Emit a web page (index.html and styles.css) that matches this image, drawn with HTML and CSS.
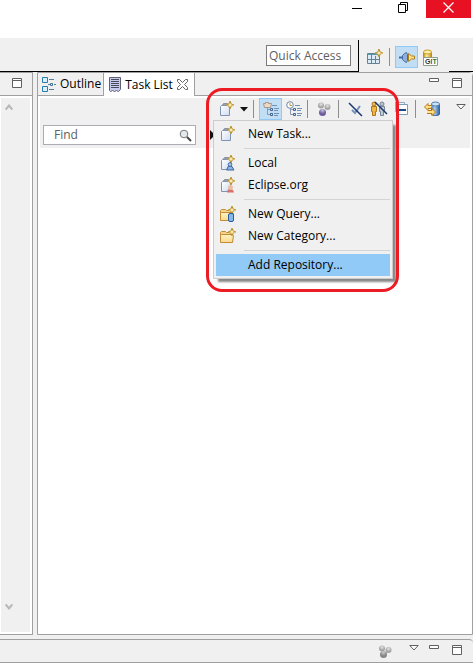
FILE: index.html
```html
<!DOCTYPE html>
<html lang="en">
<head>
<meta charset="utf-8">
<title>Task List</title>
<link rel="stylesheet" href="styles.css">
</head>
<body>
<svg class="defs" aria-hidden="true">
  <defs>
    <linearGradient id="page" x2="1" y2="1"><stop offset="0" stop-color="#fff"/><stop offset="1" stop-color="#cfdcf0"/></linearGradient>
    <linearGradient id="gold" y2="1" x2="0"><stop offset="0" stop-color="#fff3c4"/><stop offset="1" stop-color="#f8d98c"/></linearGradient>
    <linearGradient id="steel"><stop offset="0" stop-color="#4f7fbd"/><stop offset=".4" stop-color="#a9cdf0"/><stop offset="1" stop-color="#2d5b9d"/></linearGradient>
    <linearGradient id="brass"><stop offset="0" stop-color="#c48a10"/><stop offset=".4" stop-color="#fff0a0"/><stop offset="1" stop-color="#c48a10"/></linearGradient>
    <radialGradient id="ball" cx=".5" cy=".3"><stop offset="0" stop-color="#e4e4e4"/><stop offset="1" stop-color="#a2a2a2"/></radialGradient>
    <radialGradient id="violet" cx=".5" cy=".2"><stop offset="0" stop-color="#c9c2dd"/><stop offset="1" stop-color="#6b5c9c"/></radialGradient>
    <radialGradient id="dark" cx=".5" cy=".2"><stop offset="0" stop-color="#ccc"/><stop offset="1" stop-color="#858585"/></radialGradient>
    <symbol id="star" viewBox="0 0 7 7"><path d="M3.500 0 4.500 2.500 7 3.500 4.500 4.500 3.500 7 2.500 4.500 0 3.500 2.500 2.500Z" fill="#fff4bd" stroke="#b8902c" stroke-width=".9"/></symbol>
    <symbol id="task" viewBox="0 0 16 16"><path d="M3 4.500 4.500 2.500h4l1 2Z" fill="#9a9fa8" stroke="#8d929c"/><path d="M1.500 5.500l1-1h7l1 1v9h-9Z" fill="url(#page)" stroke="#8192b4"/><use href="#star" x="7" y="0" width="8" height="8"/></symbol>
    <symbol id="folder" viewBox="0 0 16 16"><path d="M.5 13.500v-9l1-1h4l1 1h6v9Z" fill="#f4d38b" stroke="#c58b35"/><path d="M.5 14.500v-7l1-1h11l1 1-1 7Z" fill="url(#gold)" stroke="#c58b35"/><use href="#star" x="8" y="0" width="8" height="8"/></symbol>
    <symbol id="maximize" viewBox="0 0 10 10"><path d="M.5.5h9v9h-9zM0 2.500h10" fill="#fff" stroke="#606060"/></symbol>
    <symbol id="minimize" viewBox="0 0 10 4"><path d="M.5.5h9v3h-9z" fill="#fff" stroke="#606060"/></symbol>
    <symbol id="viewmenu" viewBox="0 0 10 6"><path d="M.8.5h8.400L5 5Z" fill="#fff" stroke="#606060"/></symbol>
    <symbol id="tree" viewBox="0 0 16 16"><path d="M4.500 7v6.500H7M4.500 8.500H7" fill="none" stroke="#8b9aae"/><path d="M7.500 7.500h2v2h-2zM7.500 12.500h2v2h-2z" fill="#dbe8f7" stroke="#3f628f"/><path d="M11 7.500h5M11 9.500h4M11 12.500h5M11 14.500h4M9 4.500h5" stroke="#6c91ba"/></symbol>
  </defs>
</svg>

<header class="titlebar">
  <button class="win-btn" aria-label="Minimize"><svg width="14" height="12"><path d="M0 7.500h10" stroke="#000"/></svg></button>
  <button class="win-btn" aria-label="Restore"><svg width="12" height="11"><path d="M.5 2.500h7v8h-7zM2.500 2V.5h7v8H8" fill="none" stroke="#000"/></svg></button>
  <button class="win-btn close" aria-label="Close"><svg width="12" height="11"><path d="m.5.5 10 10M10.500.5l-10 10" stroke="#fff" stroke-width="1.200"/></svg></button>
</header>

<div class="frame">
  <div class="topbar">
    <div class="quick"><input type="text" aria-label="Quick Access" placeholder="Quick Access"></div>
    <div class="perspectives">
      <button class="tool" aria-label="Open Perspective"><svg width="17" height="16"><path d="M.5 4.500h12v10H.5z" fill="#dcebf7" stroke="#66828c"/><path d="M1 5.500h11" stroke="#579bb5"/><path d="M4.500 5v9M1 10.500h11M8.500 7v7" stroke="#66828c"/><use href="#star" x="8" y="0" width="8" height="8"/></svg></button>
      <span class="sep"></span>
      <button class="tool on" aria-label="Plug-in Development"><svg width="16" height="16"><path d="M0 8.500h4" stroke="#416aa8" stroke-width="2"/><path d="M3.500 6.500 5.500 4.500l2-1 1 2v6l-1 2-2-1-2-2Z" fill="#8eaedb" stroke="#456aa5"/><path d="M9.500 4.500 12.500 7h3v3h-3l-3 2.500Z" fill="#ffe28a" stroke="#ae8020"/></svg></button>
      <button class="tool" aria-label="Git"><svg width="16" height="17"><path d="M1.500 3v11c0 1 8 1 8 0V3" fill="url(#brass)" stroke="#c08a17"/><ellipse cx="5.500" cy="3" rx="4" ry="2" fill="#fff2a8" stroke="#c69a27"/><path d="M1.500 8.500h14v8h-14z" fill="#fff" stroke="#8da087"/><text class="git" x="3" y="15"><tspan fill="#333">G</tspan><tspan fill="#c22">I</tspan><tspan fill="#187f28">T</tspan></text></svg></button>
      <span class="corner"></span>
    </div>
  </div>

  <main class="workbench">
    <section class="side">
      <div class="side-head"><button class="plain" aria-label="Maximize"><svg width="10" height="10"><use href="#maximize"/></svg></button></div>
      <div class="side-body">
        <svg width="8" height="7"><path d="m.7 5.500 3.300-4 3.300 4" fill="none" stroke="#b8b8b8" stroke-width="2"/></svg>
        <svg width="8" height="7"><path d="m.7 1.500 3.300 4 3.300-4" fill="none" stroke="#b8b8b8" stroke-width="2"/></svg>
      </div>
    </section>

    <section class="view">
      <nav class="tabs">
        <button class="tab"><svg width="14" height="15"><path d="M.5.500h5v5h-5zM.5 9.500h5v5h-5z" fill="#d9efff" stroke="#297cad"/><path d="M7 2.500h5M7 12.500h5M6 7.500h2M12 7.500h2" stroke="#4b83a7"/><path d="M8.500 6.500h2v2h-2z" fill="#fff" stroke="#3c7195"/></svg>Outline</button>
        <button class="tab active"><svg width="12" height="15"><path d="M.5.500h11v12l-2 2-2-1-2 1-2-1-2 1-1-1Z" fill="#c5cbed" stroke="#625f75"/><path d="M2 2.500h8M2 4.500h8M2 6.500h8M2 8.500h8M2 10.500h8" stroke="#484b5a"/></svg>Task List<svg class="x" width="11" height="11"><path d="M.5.500h2l3 3 3-3h2v2l-3 3 3 3v2h-2l-3-3-3 3h-2v-2l3-3-3-3Z" fill="#fff" stroke="#666"/></svg></button>
        <div class="view-ctl"><button class="plain" aria-label="Minimize"><svg width="10" height="4"><use href="#minimize"/></svg></button><button class="plain" aria-label="Maximize"><svg width="10" height="10"><use href="#maximize"/></svg></button></div>
      </nav>
      <div class="panel">
        <div class="strip">
          <div class="toolbar">
            <div class="dropdown">
              <button class="tool" aria-label="New Task"><svg width="16" height="16"><use href="#task"/></svg></button>
              <button class="arrow" aria-label="More new items"><svg width="8" height="5"><path d="M0 0h8L4 4.500Z" fill="#111"/></svg></button>
              <ul class="menu">
                <li><button><svg width="16" height="16"><use href="#task"/></svg>New Task...</button></li>
                <li class="rule"></li>
                <li><button><svg width="16" height="16"><use href="#task"/><path d="m6.500 15 2-4h3l2.500 4Z" fill="#8fb4e4" stroke="#3d639c"/><circle cx="10" cy="9.500" r="1.800" fill="#b5cdee" stroke="#3d639c"/></svg>Local</button></li>
                <li><button><svg width="16" height="16"><use href="#task"/><path d="M7 15.500c0-5 6-5 7 0Z" fill="#d77068"/><circle cx="10.500" cy="10.500" r="2.500" fill="#e8bda6"/></svg>Eclipse.org</button></li>
                <li class="rule"></li>
                <li><button><svg width="16" height="16"><use href="#folder"/><rect x="8.500" y="7.500" width="5" height="8" rx="1.500" fill="#86b9ea" stroke="#285b9b"/></svg>New Query...</button></li>
                <li><button><svg width="16" height="16"><use href="#folder"/></svg>New Category...</button></li>
                <li class="rule"></li>
                <li><button class="hot"><span class="no-icon"></span>Add Repository...</button></li>
              </ul>
              <div class="ring"></div>
            </div>
            <span class="sep"></span>
            <button class="tool on" aria-label="Categorized"><svg width="16" height="16"><use href="#tree"/><path d="M1.500 6.500l-1-4h2v-1h3v1h3l-1 4Z" fill="#eed9c3" stroke="#a5968f"/></svg></button>
            <button class="tool" aria-label="Scheduled"><svg width="16" height="16"><use href="#tree"/><circle cx="4" cy="4" r="3.300" fill="#fff" stroke="#6888ad"/><path d="M4 2v2.500h2" fill="none" stroke="#c59234"/></svg></button>
            <span class="sep"></span>
            <button class="tool" aria-label="Focus on Workweek"><svg width="15" height="16"><circle cx="4" cy="4.500" r="3" fill="url(#ball)"/><circle cx="10.500" cy="6" r="3" fill="url(#ball)"/><circle cx="5.500" cy="11.500" r="3.500" fill="url(#violet)"/></svg></button>
            <span class="sep"></span>
            <button class="tool" aria-label="Filter Completed Tasks"><svg width="16" height="16"><path d="m4 9 3 3 5-7" fill="none" stroke="#7192bb" stroke-width="2"/><path d="m1 2 13 13" stroke="#18376f" stroke-width="1.500"/></svg></button>
            <button class="tool" aria-label="Show Only My Tasks"><svg width="18" height="16"><circle cx="4" cy="3" r="2" fill="#eeb94d" stroke="#ad7717"/><path d="M1.500 5.500h5v5h-1v4h-3v-4h-1Z" fill="#efb746" stroke="#ad7717"/><circle cx="12" cy="3" r="2" fill="#bbc5cd" stroke="#758694"/><path d="M9.500 5.500h5v5h-1v4h-3v-4h-1Z" fill="#c2ccd4" stroke="#758694"/><path d="m5 1 12 12" stroke="#18376f" stroke-width="1.500"/></svg></button>
            <button class="tool" aria-label="Collapse All"><svg width="14" height="14"><path d="M.5.500h9v9h-9z" fill="#eef5fb" stroke="#91a8bd"/><path d="M2.500 2.500h10v10h-10z" fill="#fff" stroke="#7e9db5"/><path d="M4 8h7" stroke="#174c88" stroke-width="2"/></svg></button>
            <span class="sep"></span>
            <button class="tool" aria-label="Synchronize"><svg width="17" height="16"><path d="M7.500 3v10c0 2 8 2 8 0V3" fill="url(#steel)" stroke="#3b659c"/><ellipse cx="11.500" cy="3" rx="4" ry="2" fill="#cde4f8" stroke="#4d79ae"/><path d="M8 4.500H4v-2L.5 6 4 9.500v-2h3M3 12.500h5v2l3.500-3.500L8 7.500v2H4" fill="#ffdf83" stroke="#b77b19"/></svg></button>
            <button class="arrow last" aria-label="View Menu"><svg width="10" height="6"><use href="#viewmenu"/></svg></button>
          </div>
          <div class="find">
            <label class="search"><input type="text" aria-label="Find" placeholder="Find"><svg width="13" height="13"><circle cx="5" cy="5" r="3.800" fill="#e4e9ec" stroke="#777"/><path d="m8 8 4 4" stroke="#444" stroke-width="2"/></svg></label>
            <svg width="5" height="10"><path d="M0 0v10l5-5Z" fill="#111"/></svg>
          </div>
        </div>
      </div>
    </section>
  </main>

  <footer class="bottom">
    <button class="plain" aria-label="Focus"><svg width="15" height="16"><circle cx="4" cy="3.500" r="3" fill="url(#ball)"/><circle cx="10.500" cy="5" r="3" fill="url(#ball)"/><circle cx="5.500" cy="9.500" r="3.500" fill="url(#dark)"/></svg></button>
    <button class="plain menu-btn" aria-label="View Menu"><svg width="10" height="6"><use href="#viewmenu"/></svg></button>
    <div class="pair">
      <button class="plain" aria-label="Minimize"><svg width="10" height="4"><use href="#minimize"/></svg></button>
      <button class="plain" aria-label="Maximize"><svg width="10" height="10"><use href="#maximize"/></svg></button>
    </div>
  </footer>
</div>
</body>
</html>
```
FILE: styles.css
```css
* { box-sizing: border-box; }
body {
  margin: 0;
  min-height: 100vh;
  display: flex;
  flex-direction: column;
  background: #fff;
  color: #000;
  font: 12px/16px "Open Sans", "Noto Sans", sans-serif;
}
svg { display: block; flex: none; }
.defs { position: absolute; width: 0; height: 0; }
button {
  margin: 0;
  padding: 0;
  border: 0;
  background: none;
  color: inherit;
  font: inherit;
}
input {
  min-width: 0;
  padding: 0;
  color: #555;
  font: inherit;
}
input::placeholder { color: #606060; opacity: 1; }

.titlebar {
  display: flex;
  justify-content: flex-end;
  height: 38px;
  padding-right: 5px;
}
.win-btn {
  display: flex;
  align-items: center;
  justify-content: center;
  width: 45px;
  height: 18px;
  padding-bottom: 4px;
}
.close { background: #e81123; }

.frame {
  flex: 1;
  display: flex;
  flex-direction: column;
  margin: 0 3px 2px 0;
  background: #f0f0f0;
}
.topbar { display: flex; height: 34px; }
.quick {
  flex: 1;
  display: flex;
  justify-content: flex-end;
  align-items: flex-start;
  padding: 7px 7px 0 0;
  border-bottom: 1px solid #000;
}
.quick input {
  width: 85px;
  height: 21px;
  padding-left: 2px;
  border: 1px solid #7a7a7a;
  background: #fff;
}
.perspectives {
  display: flex;
  align-items: flex-start;
  margin-top: 2px;
  padding: 6px 0 0 5px;
  border-left: 1px solid #000;
}
.corner {
  align-self: flex-end;
  width: 24px;
  margin-left: 8px;
  border-bottom: 1px solid #000;
}
.git { font: bold 7px "Liberation Sans", sans-serif; }

.tool {
  display: flex;
  align-items: center;
  justify-content: center;
  width: 23px;
  height: 22px;
  border: 1px solid transparent;
}
.tool.on { border-color: #90c8f6; background: #c2def5; }
.sep {
  width: 1px;
  height: 18px;
  margin: 2px 5px 0 2px;
  background: #8d8d8d;
}

.workbench { flex: 1; display: flex; gap: 4px; }
.side {
  display: flex;
  flex-direction: column;
  width: 33px;
  border: solid #a0a0a0;
  border-width: 1px 1px 1px 0;
  background: #fff;
}
.side-head {
  display: flex;
  justify-content: flex-end;
  height: 23px;
  padding: 5px 10px 0 0;
  border-bottom: 1px solid #a0a0a0;
  background: #f0f0f0;
}
.plain { display: flex; align-items: flex-start; }
.side-body {
  flex: 1;
  display: flex;
  flex-direction: column;
  justify-content: space-between;
  margin: 2px 2px 2px 1px;
  padding: 6px 0 22px 4px;
  background: #f0f0f0;
}

.view {
  flex: 1;
  display: flex;
  flex-direction: column;
  border: 1px solid #a0a0a0;
  border-top-right-radius: 4px;
  background: #fff;
}
.tabs {
  display: flex;
  height: 23px;
  background: #f0f0f0;
}
.tab {
  display: flex;
  align-items: center;
  gap: 4px;
  padding: 0 2px 0 4px;
  border-bottom: 1px solid #a0a0a0;
}
.tab.active {
  padding: 0 6px 0 5px;
  border: solid #a0a0a0;
  border-width: 0 1px;
  background: #fff;
}
.view-ctl {
  flex: 1;
  display: flex;
  justify-content: flex-end;
  gap: 13px;
  padding: 5px 10px 0 0;
  border-bottom: 1px solid #a0a0a0;
}
.panel { flex: 1; padding: 2px; }
.strip { height: 50px; background: #f0f0f0; }
.toolbar { display: flex; justify-content: flex-end; }
.arrow {
  display: flex;
  align-items: center;
  justify-content: center;
  width: 11px;
  height: 22px;
  margin-right: 2px;
}
.last { width: 18px; height: 18px; margin: 0 0 0 8px; }
.find {
  display: flex;
  align-items: center;
  gap: 14px;
  padding: 5px 0 0 3px;
}
.search {
  display: flex;
  align-items: center;
  width: 153px;
  height: 20px;
  padding: 0 3px 0 10px;
  border: 1px solid #abadb3;
  background: #fff;
}
.search input { flex: 1; border: 0; outline: 0; background: none; }

.dropdown { position: relative; display: flex; }
.menu {
  position: absolute;
  z-index: 2;
  top: 22px;
  left: -2px;
  width: 180px;
  margin: 0;
  padding: 2px;
  border: 1px solid #ccc;
  background: #f0f0f0;
  box-shadow: 4px 4px 2px -1px #888;
  list-style: none;
}
.menu button {
  display: flex;
  align-items: center;
  gap: 12px;
  width: 100%;
  height: 22px;
  padding-left: 4px;
  text-align: left;
}
.menu .hot { background: #91c9f7; }
.no-icon { width: 16px; }
.rule {
  height: 1px;
  margin: 3px 0 3px 28px;
  background: #d4d4d4;
}
.ring {
  position: absolute;
  z-index: 3;
  top: -10px;
  left: -9px;
  width: 193px;
  height: 204px;
  border: 3px solid #ed1c24;
  border-radius: 16px;
  pointer-events: none;
}

.bottom {
  display: flex;
  justify-content: flex-end;
  gap: 10px;
  height: 24px;
  margin-top: 4px;
  padding: 5px 11px 0 0;
  border: solid #a0a0a0;
  border-width: 1px 0;
  border-top-right-radius: 4px;
}
.menu-btn { margin-left: 6px; }
.pair { display: flex; gap: 13px; }
```
